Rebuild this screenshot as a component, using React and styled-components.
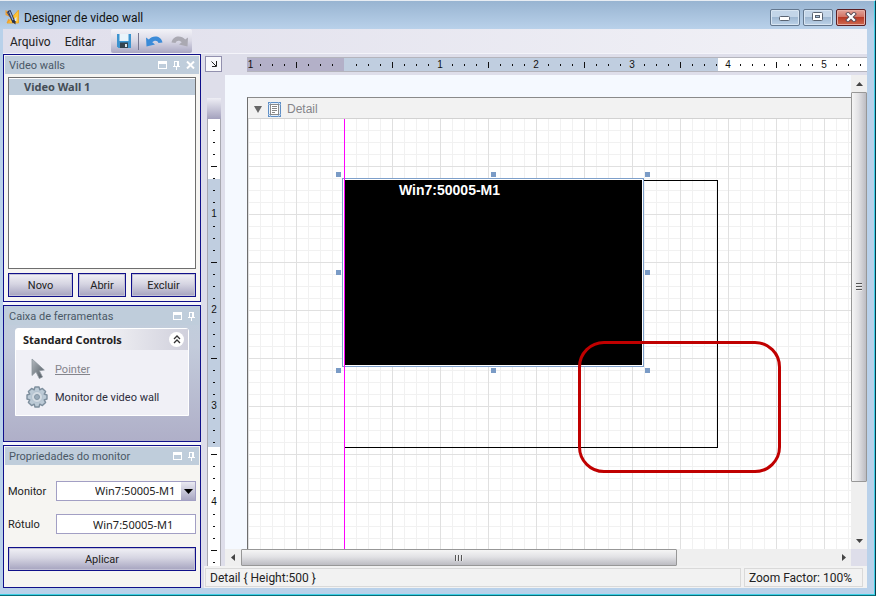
import React, { useState } from 'react';
import styled, { createGlobalStyle, css } from 'styled-components';

const UNIT = 8;

const App = () => {
  const [monitor, setMonitor] = useState('Win7:50005-M1');
  const [label, setLabel] = useState('Win7:50005-M1');

  const handleMonitorChange = (e) => setMonitor(e.target.value);
  const handleLabelChange = (e) => setLabel(e.target.value);

  return (
    <>
      <GlobalStyle />
      <Frame>
        <TitleBar>
          <LogoIcon />
          <Title>Designer de video wall</Title>
          <WindowButtons>
            <WindowButton type="button" aria-label="Minimizar">
              <svg width="12" height="8" viewBox="0 0 12 8">
                <rect x="0.5" y="3.5" width="10" height="4" rx="1" fill="#fff" stroke="#5a6472" />
              </svg>
            </WindowButton>
            <WindowButton type="button" aria-label="Maximizar">
              <svg width="12" height="10" viewBox="0 0 12 10">
                <rect x="0.5" y="0.5" width="10" height="8" rx="1" fill="#fff" stroke="#5a6472" />
                <rect x="3.5" y="3.5" width="4" height="2" fill="#a8bfd8" stroke="#5a6472" />
              </svg>
            </WindowButton>
            <WindowButton type="button" aria-label="Fechar" $close>
              <svg width="12" height="10" viewBox="0 0 12 10">
                <path d="M3 2 9 8M9 2 3 8" stroke="#5a4a54" strokeWidth="4" strokeLinecap="square" />
                <path d="M3 2 9 8M9 2 3 8" stroke="#fff" strokeWidth="2.2" strokeLinecap="square" />
              </svg>
            </WindowButton>
          </WindowButtons>
        </TitleBar>

        <MenuBar>
          <MenuItem type="button">Arquivo</MenuItem>
          <MenuItem type="button">Editar</MenuItem>
          <Toolbar>
            <ToolButton type="button" aria-label="Salvar">
              <SaveIcon />
            </ToolButton>
            <ToolDivider />
            <ToolButton type="button" aria-label="Desfazer">
              <UndoIcon color="#3b8bd8" />
            </ToolButton>
            <ToolButton type="button" aria-label="Refazer" $flip>
              <UndoIcon color="#aaa9b2" />
            </ToolButton>
          </Toolbar>
        </MenuBar>

        <Content>
          <Sidebar>
            <Panel>
              <PanelHeader title="Video walls" closable />
              <PanelBody>
                <WallList>
                  <WallItem>Video Wall 1</WallItem>
                </WallList>
                <ButtonRow>
                  <PushButton type="button">Novo</PushButton>
                  <PushButton type="button" $narrow>
                    Abrir
                  </PushButton>
                  <PushButton type="button">Excluir</PushButton>
                </ButtonRow>
              </PanelBody>
            </Panel>

            <Panel $shaded>
              <PanelHeader title="Caixa de ferramentas" />
              <ToolGroup>
                <ToolGroupHeader>
                  Standard Controls
                  <CollapseButton type="button" aria-label="Recolher">
                    <svg width="8" height="9" viewBox="0 0 8 9" fill="none" stroke="#333" strokeWidth="1.3">
                      <path d="M1 4 4 1 7 4M1 8 4 5 7 8" />
                    </svg>
                  </CollapseButton>
                </ToolGroupHeader>
                <ToolGroupItems>
                  <ToolItem type="button" $selected>
                    <PointerIcon />
                    <span>Pointer</span>
                  </ToolItem>
                  <ToolItem type="button">
                    <GearIcon />
                    <span>Monitor de video wall</span>
                  </ToolItem>
                </ToolGroupItems>
              </ToolGroup>
            </Panel>

            <Panel $grow>
              <PanelHeader title="Propriedades do monitor" />
              <Form>
                <Field>
                  <FieldLabel htmlFor="monitor">Monitor</FieldLabel>
                  <SelectWrap>
                    <Select id="monitor" value={monitor} onChange={handleMonitorChange}>
                      <option>Win7:50005-M1</option>
                    </Select>
                    <SelectArrow>
                      <svg width="9" height="5" viewBox="0 0 9 5">
                        <path d="M0 0h9L4.500 5z" fill="#000" />
                      </svg>
                    </SelectArrow>
                  </SelectWrap>
                </Field>
                <Field>
                  <FieldLabel htmlFor="rotulo">Rótulo</FieldLabel>
                  <TextInput id="rotulo" type="text" value={label} onChange={handleLabelChange} />
                </Field>
                <ButtonRow>
                  <PushButton type="button">Aplicar</PushButton>
                </ButtonRow>
              </Form>
            </Panel>
          </Sidebar>

          <Workspace>
            <Designer>
              <CornerCell>
                <CornerButton type="button" aria-label="Selecionar relatório">
                  <svg width="6" height="6" viewBox="0 0 6 6" fill="none" stroke="#222">
                    <path d="M0.500 0.500 5 5M5.500 0v5.500H1" />
                  </svg>
                </CornerButton>
              </CornerCell>
              <HorizontalRuler>
                <Ticks>{renderTicks(-8, 55)}</Ticks>
              </HorizontalRuler>

              <RulerColumn>
                <RulerHandle />
                <VerticalRuler>
                  <Ticks $vertical>{renderTicks(1, 39, true)}</Ticks>
                </VerticalRuler>
              </RulerColumn>

              <Canvas>
                <Page>
                  <Band>
                    <svg width="8" height="7" viewBox="0 0 8 7">
                      <path d="M0 0h8L4 7z" fill="#666" />
                    </svg>
                    <DetailIcon />
                    Detail
                  </Band>
                  <Grid>
                    <WallOutline />
                    <Selection>
                      <MonitorBlock>Win7:50005-M1</MonitorBlock>
                      {['0% 0%', '50% 0%', '100% 0%', '0% 50%', '100% 50%', '0% 100%', '50% 100%', '100% 100%'].map(
                        (spot) => (
                          <Handle key={spot} $x={spot.split(' ')[0]} $y={spot.split(' ')[1]} />
                        ),
                      )}
                    </Selection>
                    <MarginLine />
                    <Callout />
                  </Grid>
                </Page>
              </Canvas>

              <ScrollBar $vertical>
                <ScrollArrow direction="up" />
                <Thumb $vertical>
                  <Grip $vertical />
                </Thumb>
                <Track $size={50} />
                <ScrollArrow direction="down" />
              </ScrollBar>
              <ScrollBar>
                <ScrollArrow direction="left" />
                <Thumb>
                  <Grip />
                </Thumb>
                <Track $size={157} />
                <ScrollArrow direction="right" />
              </ScrollBar>
            </Designer>

            <StatusBar>
              <StatusCell $grow>{'Detail { Height:500 }'}</StatusCell>
              <StatusCell>Zoom Factor: 100%</StatusCell>
            </StatusBar>
          </Workspace>
        </Content>
      </Frame>
    </>
  );
};

export default App;

const renderTicks = (from, count, vertical = false) =>
  Array.from({ length: count }, (_, i) => {
    const n = from + i;
    if (n === 0) return <Tick key={n} />;
    if (n % UNIT === 0) {
      return (
        <Tick key={n} $edge={i === 0}>
          {Math.abs(n / UNIT)}
        </Tick>
      );
    }
    return (
      <Tick key={n}>
        <Mark $long={n % 4 === 0} $vertical={vertical} />
      </Tick>
    );
  });

const PanelHeader = ({ title, closable }) => (
  <Header>
    <HeaderTitle>{title}</HeaderTitle>
    <HeaderButton type="button" aria-label="Maximizar painel">
      <svg width="9" height="8" viewBox="0 0 9 8">
        <path d="M0 0h9v8H0zM1 3v4h7V3z" fill="#fff" fillRule="evenodd" />
      </svg>
    </HeaderButton>
    <HeaderButton type="button" aria-label="Fixar painel">
      <svg width="7" height="9" viewBox="0 0 7 9">
        <path d="M1 0h5v5h1v1H4v3H3V6H0V5h1zM2 1v4h2V1z" fill="#fff" fillRule="evenodd" />
      </svg>
    </HeaderButton>
    {closable && (
      <HeaderButton type="button" aria-label="Fechar painel">
        <svg width="9" height="8" viewBox="0 0 9 8">
          <path d="M1 0.500 8 7.500M8 0.500 1 7.500" stroke="#fff" strokeWidth="2" />
        </svg>
      </HeaderButton>
    )}
  </Header>
);

const arrowPaths = {
  up: 'M0 6 3.500 2 7 6z',
  down: 'M0 2h7L3.500 6z',
  left: 'M5 0v7L1 3.500z',
  right: 'M2 0v7L6 3.500z',
};

const ScrollArrow = ({ direction }) => (
  <ArrowButton type="button" aria-label={direction}>
    <svg width="7" height="7" viewBox="0 0 7 7">
      <path d={arrowPaths[direction]} fill="#444" />
    </svg>
  </ArrowButton>
);

const LogoIcon = () => (
  <svg width="16" height="16" viewBox="0 0 16 16">
    <path d="M13.500 1v13H2z" fill="#ffc436" stroke="#e8a01e" strokeWidth="0.800" />
    <path d="M11.500 7.500v4.500H8z" fill="#dbe9f7" />
    <path d="M0.500 1 3 2.500 5 8 0.500 6z" fill="#f0a030" />
    <path d="M3.500 9.500 5.500 12 1.500 14z" fill="#f0a030" />
    <path d="M4 1.500 9 13.500" stroke="#27304c" strokeWidth="3.200" />
    <path d="M4.500 2.500 8 11" stroke="#9db4dc" strokeWidth="1.200" />
    <path d="M2 3 6 9" stroke="#3a4a7c" strokeWidth="1.200" />
    <path d="M7.500 13 10.500 12 10.500 15.500z" fill="#27304c" />
  </svg>
);

const SaveIcon = () => (
  <svg width="14" height="14" viewBox="0 0 14 14">
    <path d="M0 0h14v14H1.500L0 12.500z" fill="#3c93cf" />
    <path d="M2.500 0h9v7h-9z" fill="#e9f4fb" />
    <path d="M3 8.500h8V14H3z" fill="#34434f" />
    <path d="M8 10h2v3H8z" fill="#dfe6ec" />
  </svg>
);

const UndoIcon = ({ color }) => (
  <svg width="17" height="11" viewBox="0 0 17 11">
    <path
      d="M0 1.500 2.800 3.500C6.500 -0.800 15 -0.800 16.500 6.500L12.500 7C11.500 4.300 8.500 3.800 6.300 6.200L9 8.500 0.500 10.500z"
      fill={color}
    />
  </svg>
);

const PointerIcon = () => (
  <svg width="22" height="22" viewBox="0 0 22 22">
    <defs>
      <linearGradient id="pointer" x1="0" y1="0" x2="1" y2="1">
        <stop offset="0" stopColor="#b4bac0" />
        <stop offset="1" stopColor="#4d565e" />
      </linearGradient>
    </defs>
    <path
      d="M6 1v16.500l4-3.700 3.300 6.700 3.200-1.500-3.200-6.300 5-0.700z"
      fill="url(#pointer)"
      stroke="#8b949c"
      strokeWidth="0.800"
    />
  </svg>
);

const GearIcon = () => (
  <svg width="22" height="22" viewBox="0 0 22 22">
    <path
      d="M9 1h4l0.800 2.800 2.600-1.400 3.200 3.200-1.400 2.600L21 9v4l-2.800 0.800 1.400 2.600-3.200 3.200-2.600-1.400L13 21H9l-0.800-2.800-2.600 1.400-3.200-3.200 1.400-2.600L1 13V9l2.800-0.800-1.400-2.600 3.200-3.200 2.600 1.400z"
      fill="#bccad6"
      stroke="#7d8e9d"
      strokeWidth="1.400"
      strokeLinejoin="round"
    />
    <circle cx="11" cy="11" r="5.500" fill="#d3dbe3" stroke="#b3c2cf" />
    <circle cx="11" cy="11" r="2.500" fill="#9aabba" stroke="#8496a5" />
  </svg>
);

const DetailIcon = () => (
  <svg width="13" height="15" viewBox="0 0 13 15">
    <rect x="0.500" y="0.500" width="12" height="14" fill="#e8f1fa" stroke="#5f8fc6" />
    <path d="M2.500 0v15M10.500 0v15M0 2.500h13M0 12.500h13" stroke="#8fb2da" />
    <rect x="2.500" y="2.500" width="8" height="10" fill="#fff" stroke="#8a8a8a" />
    <path d="M4 4.500h5M4 6.500h5M4 8.500h5M4 10.500h3" stroke="#888" />
  </svg>
);

const GlobalStyle = createGlobalStyle`
  * {
    box-sizing: border-box;
  }

  body {
    margin: 0;
    font-family: Roboto, 'Noto Sans', sans-serif;
    font-size: 11px;
    line-height: 16px;
    color: #222;
  }

  button, input, select {
    margin: 0;
    padding: 0;
    border: 0;
    background: none;
    font: inherit;
    color: inherit;
  }

  svg {
    display: block;
    flex: none;
  }
`;

const Frame = styled.div`
  display: flex;
  flex-direction: column;
  min-height: 100vh;
  padding: 0 8px 7px 3px;
  background: linear-gradient(#98b4d1, #b9d1ea 28px);
  border-top: 1px solid #e8edf3;
  border-right: 1px solid #0b3b4c;
  border-bottom: 1px solid #0a6c78;
  box-shadow: inset -1px -1px 0 #3fd0e6;
`;

const TitleBar = styled.header`
  display: flex;
  align-items: center;
  height: 28px;
  padding: 4px 1px 0 2px;
`;

const Title = styled.h1`
  flex: 1;
  margin: 0 0 0 3px;
  padding-top: 2px;
  font-size: 12px;
  font-weight: 400;
  color: #111;
`;

const WindowButtons = styled.div`
  display: flex;
  gap: 3px;
`;

const WindowButton = styled.button`
  display: flex;
  align-items: center;
  justify-content: center;
  width: 30px;
  height: 17px;
  border: 1px solid #64788f;
  border-radius: 2px;
  background: linear-gradient(#c3d5e8 45%, #9fb8d2 50%, #bdd2e8);
  box-shadow: inset 0 0 0 1px #d8e5f2;

  ${({ $close }) =>
    $close &&
    css`
      border-color: #5c1f22;
      background: linear-gradient(#e2a399, #d27566 45%, #b83a26 50%, #cf6a50);
      box-shadow: inset 0 0 0 1px #e6ada3;
    `}
`;

const MenuBar = styled.nav`
  display: flex;
  align-items: stretch;
  height: 25px;
  background: linear-gradient(90deg, #dfdeeb, #f2f2f7);
  border-bottom: 1px solid #f4f4fa;
`;

const MenuItem = styled.button`
  padding: 2px 7px 0;
  font-size: 12px;
`;

const Toolbar = styled.div`
  display: flex;
  align-items: center;
  margin-left: 8px;
  border-radius: 2px;
  background: linear-gradient(#f3f3f8, #d9d8e5 50%, #a9a7c2);
`;

const ToolButton = styled.button`
  display: flex;
  padding: 0 4px;
  transform: ${({ $flip }) => ($flip ? 'scaleX(-1)' : 'none')};

  &:first-child {
    padding: 0 7px 0 6px;
  }
`;

const ToolDivider = styled.span`
  width: 1px;
  height: 17px;
  margin-right: 3px;
  background: #77778f;
`;

const Content = styled.main`
  display: flex;
  flex: 1;
  background: #dedeea;
`;

const Sidebar = styled.aside`
  display: flex;
  flex-direction: column;
  flex: none;
  gap: 3px;
  width: 198px;
  background: #f4f4fa;
`;

const Panel = styled.section`
  display: flex;
  flex-direction: column;
  flex: ${({ $grow }) => ($grow ? 1 : 'none')};
  padding: 1px;
  border: 1px solid #10108a;
  background: ${({ $shaded }) => ($shaded ? 'linear-gradient(#c0cfdc, #c3cbdb 30%, #afafc8)' : '#f6f5f2')};
`;

const Header = styled.div`
  display: flex;
  align-items: center;
  gap: 6px;
  height: 18px;
  padding: 0 4px;
  background: #bfcddb;
`;

const HeaderTitle = styled.h2`
  flex: 1;
  margin: 0;
  padding-top: 1px;
  font-size: 11px;
  font-weight: 400;
  color: #4a5866;
`;

const HeaderButton = styled.button`
  display: flex;
`;

const PanelBody = styled.div`
  display: flex;
  flex-direction: column;
  gap: 4px;
  padding: 3px;
`;

const WallList = styled.ul`
  min-height: 192px;
  margin: 0;
  padding: 1px 0;
  border: 1px solid #6e6e6e;
  background: #fff;
  list-style: none;
`;

const WallItem = styled.li`
  padding: 0 15px;
  background: #bfcddb;
  font-family: 'Noto Sans', sans-serif;
  font-weight: 700;
  color: #444c55;
`;

const ButtonRow = styled.div`
  display: flex;
  gap: 5px;
`;

const PushButton = styled.button`
  flex: ${({ $narrow }) => ($narrow ? 47 : 65)};
  height: 24px;
  padding-top: 2px;
  border: 1px solid #10108a;
  background: linear-gradient(#f1f1f6, #d6d5e2 45%, #a5a3bf);
  box-shadow: inset 0 0 0 1px #c3c2d6;
  text-align: center;
`;

const ToolGroup = styled.div`
  margin: 3px 10px 24px;
  border: 1px solid #fff;
  border-radius: 3px 3px 0 0;
  background: #f0f0f6;
`;

const ToolGroupHeader = styled.h3`
  display: flex;
  align-items: center;
  justify-content: space-between;
  height: 21px;
  margin: 0;
  padding: 0 4px 0 7px;
  background: linear-gradient(90deg, #fff 30%, #d0d0dc);
  font-family: 'Noto Sans', sans-serif;
  font-size: 11px;
  font-weight: 700;
`;

const CollapseButton = styled.button`
  display: flex;
  align-items: center;
  justify-content: center;
  width: 15px;
  height: 15px;
  border-radius: 50%;
  background: #fff;
`;

const ToolGroupItems = styled.div`
  display: flex;
  flex-direction: column;
  gap: 6px;
  padding: 8px 10px 7px;
`;

const ToolItem = styled.button`
  display: flex;
  align-items: center;
  gap: 7px;
  color: ${({ $selected }) => ($selected ? '#85858c' : '#2c2c3c')};
  text-decoration: ${({ $selected }) => ($selected ? 'underline' : 'none')};
  white-space: nowrap;

  span {
    padding-top: 2px;
  }
`;

const Form = styled.form`
  display: flex;
  flex-direction: column;
  gap: 13px;
  padding: 16px 3px 14px;
`;

const Field = styled.div`
  display: flex;
  align-items: center;
`;

const FieldLabel = styled.label`
  width: 48px;
  padding-top: 2px;
`;

const fieldBox = css`
  flex: 1;
  min-width: 0;
  height: 20px;
  border: 1px solid #a29fc4;
  background: #fff;
  font-family: 'Noto Sans', sans-serif;
`;

const SelectWrap = styled.div`
  display: flex;
  position: relative;
  ${fieldBox};
`;

const Select = styled.select`
  flex: 1;
  padding-left: 38px;
  appearance: none;
`;

const SelectArrow = styled.span`
  position: absolute;
  top: 0;
  right: 0;
  bottom: 0;
  display: flex;
  align-items: center;
  justify-content: center;
  width: 14px;
  background: linear-gradient(#e9e9f1, #a9a7c2);
  pointer-events: none;
`;

const TextInput = styled.input`
  ${fieldBox};
  padding-left: 36px;
`;

const Workspace = styled.section`
  display: flex;
  flex-direction: column;
  flex: 1;
  min-width: 0;
  padding-left: 3px;
`;

const Designer = styled.div`
  display: grid;
  flex: 1;
  grid-template-columns: 21px minmax(0, 1fr) 16px;
  grid-template-rows: 21px minmax(0, 1fr) 17px;
  min-height: 0;
`;

const CornerCell = styled.div`
  padding: 2px 1px;
`;

const CornerButton = styled.button`
  display: flex;
  align-items: center;
  justify-content: center;
  width: 17px;
  height: 16px;
  border: 1px solid #9290ae;
  background: #f8f8fb;
`;

const rulerText = css`
  overflow: hidden;
  font: 10px/12px 'Liberation Sans', Arial, sans-serif;
  color: #111;
`;

const HorizontalRuler = styled.div`
  grid-column: 2 / 4;
  align-self: center;
  height: 15px;
  margin-left: 22px;
  padding-top: 1px;
  border: solid #b4b4bc;
  border-width: 1px 0;
  background: linear-gradient(90deg, #b3b0c8 97px, #c0cee0 97px, #c0cee0 471px, #fff 471px);
  ${rulerText};
`;

const RulerColumn = styled.div`
  grid-row: 2 / 4;
  display: flex;
  flex-direction: column;
  min-height: 0;
  padding: 23px 4px 0 3px;
`;

const RulerHandle = styled.div`
  flex: none;
  height: 21px;
  background: linear-gradient(#eeeef5, #a3a1bd);
`;

const VerticalRuler = styled.div`
  flex: 1 1 0;
  min-height: 0;
  border: solid #a8a8b0;
  border-width: 0 1px;
  background: linear-gradient(#fff 60px, #c0cee0 60px, #c0cee0 328px, #fff 328px);
  ${rulerText};
`;

const Ticks = styled.div`
  display: flex;
  flex-direction: ${({ $vertical }) => ($vertical ? 'column' : 'row')};
  padding-top: ${({ $vertical }) => ($vertical ? 5 : 0)}px;
`;

const Tick = styled.span`
  display: flex;
  flex: none;
  align-items: center;
  justify-content: center;
  min-width: ${({ $edge }) => ($edge ? 7 : 12)}px;
  height: 12px;
`;

const Mark = styled.i`
  width: ${({ $long, $vertical }) => ($long && $vertical ? 6 : $vertical ? 2 : 1)}px;
  height: ${({ $long, $vertical }) => ($long && !$vertical ? 6 : $vertical ? 1 : 2)}px;
  background: #111;
`;

const Canvas = styled.div`
  display: flex;
  min-width: 0;
  overflow: hidden;
  padding: 22px 0 0 22px;
  background: #f5f9ff;
`;

const Page = styled.div`
  display: flex;
  flex-direction: column;
  flex: 1;
  border-top: 1px solid #8a8a8a;
  border-left: 1px solid #6e6e6e;
`;

const Band = styled.div`
  display: flex;
  align-items: center;
  gap: 6px;
  height: 21px;
  padding: 2px 6px 0;
  border-bottom: 1px solid #d2d2d2;
  background: #f2f2f2;
  font: 12px/16px 'Liberation Sans', Arial, sans-serif;
  color: #85858a;
`;

const Grid = styled.div`
  position: relative;
  flex: 1;
  overflow: hidden;
  background-color: #fff;
  background-image: linear-gradient(90deg, #e0e0e0 1px, transparent 1px),
    linear-gradient(#e0e0e0 1px, transparent 1px), linear-gradient(90deg, #f1f1f1 1px, transparent 1px),
    linear-gradient(#f1f1f1 1px, transparent 1px);
  background-position: 0 -1px;
  background-size: 48px 48px, 48px 48px, 12px 12px, 12px 12px;
`;

const WallOutline = styled.div`
  position: absolute;
  top: 61px;
  left: 96px;
  width: 374px;
  height: 268px;
  border: 1px solid #000;
`;

const Selection = styled.div`
  position: absolute;
  top: 59px;
  left: 94px;
  width: 302px;
  height: 189px;
  padding: 1px 1px 1px 2px;
  border: 1px solid #7d9fca;
  background: #fff;
`;

const MonitorBlock = styled.div`
  height: 100%;
  padding: 2px 54px;
  background: #000;
  font: 700 14px/16px 'Liberation Sans', Arial, sans-serif;
  color: #fff;
`;

const Handle = styled.i`
  position: absolute;
  top: ${({ $y }) => $y};
  left: ${({ $x }) => $x};
  width: 5px;
  height: 5px;
  margin: ${({ $y }) => ({ '0%': -7, '50%': -3, '100%': 2 })[$y]}px 0 0
    ${({ $x }) => ({ '0%': -7, '50%': -2, '100%': 2 })[$x]}px;
  background: #7a9bc6;
`;

const MarginLine = styled.div`
  position: absolute;
  top: 0;
  bottom: 0;
  left: 96px;
  width: 1px;
  background: #f0f;
`;

const Callout = styled.div`
  position: absolute;
  top: 222px;
  left: 330px;
  width: 203px;
  height: 132px;
  border: 3px solid #c00000;
  border-radius: 26px;
`;

const ScrollBar = styled.div`
  display: flex;
  grid-column: ${({ $vertical }) => ($vertical ? 3 : 2)};
  grid-row: ${({ $vertical }) => ($vertical ? 2 : 3)};
  flex-direction: ${({ $vertical }) => ($vertical ? 'column' : 'row')};
  background: #efefef;
`;

const ArrowButton = styled.button`
  display: flex;
  flex: none;
  align-items: center;
  justify-content: center;
  min-width: 16px;
  min-height: 17px;
`;

const Thumb = styled.div`
  display: flex;
  flex: ${({ $vertical }) => ($vertical ? 388 : 433)};
  align-items: center;
  justify-content: center;
  border: 1px solid #979797;
  border-radius: 1px;
  background: linear-gradient(${({ $vertical }) => ($vertical ? '90deg' : '180deg')}, #f5f5f5, #e2e2e5 45%, #bcbcc2);
`;

const Grip = styled.i`
  width: ${({ $vertical }) => ($vertical ? 6 : 8)}px;
  height: ${({ $vertical }) => ($vertical ? 8 : 6)}px;
  background: repeating-linear-gradient(
    ${({ $vertical }) => ($vertical ? '180deg' : '90deg')},
    #555 0 1px,
    #eee 1px 2px,
    transparent 2px 3px
  );
`;

const Track = styled.div`
  flex: ${({ $size }) => $size};
`;

const StatusBar = styled.footer`
  display: flex;
  gap: 3px;
  height: 22px;
  padding: 2px 4px 1px 1px;
  background: #f2f2f2;
  font-size: 12px;
`;

const StatusCell = styled.div`
  flex: ${({ $grow }) => ($grow ? 1 : 'none')};
  padding: 0 10px 0 4px;
  border: 1px solid #d9d9d9;
  line-height: 18px;
  white-space: nowrap;
`;
